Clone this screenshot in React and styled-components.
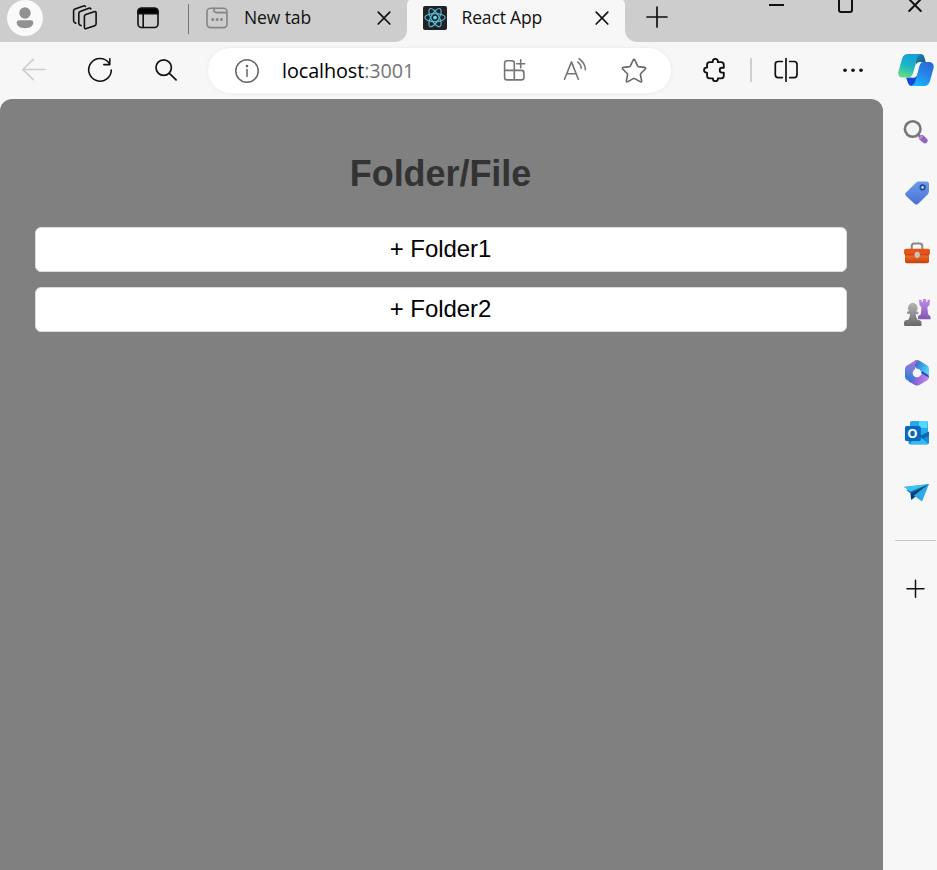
import React from "react";
import styled, { createGlobalStyle } from "styled-components";

const GlobalStyle = createGlobalStyle`
  * { box-sizing: border-box; }
  body { margin: 0; background: #f7f7f7; }
`;

const Browser = styled.div`
  width: 937px;
  height: 870px;
  display: flex;
  flex-direction: column;
  overflow: hidden;
  background: #f7f7f7;
  font-family: "Open Sans", "Noto Sans", sans-serif;
  color: #111;
`;

const TabStrip = styled.header`
  display: flex;
  height: 42px;
  flex: none;
  background: linear-gradient(#cdcdcd 0 16px, #f7f7f7 16px);
`;

const StripSection = styled.div`
  display: flex;
  align-items: center;
  height: 42px;
  padding-bottom: 6px;
  background: #cdcdcd;
`;

const LeftSection = styled(StripSection)`
  width: 407px;
  padding-left: 7px;
  border-bottom-right-radius: 12px;
`;

const RightSection = styled(StripSection)`
  width: 312px;
  padding-left: 21px;
  border-bottom-left-radius: 12px;
`;

const ActiveTab = styled(StripSection)`
  width: 218px;
  padding-left: 16px;
  background: #f7f7f7;
  border-radius: 3px 3px 0 0 / 5px 5px 0 0;
`;

const TabTitle = styled.span`
  width: ${(p) => p.$width}px;
  margin-left: ${(p) => p.$gap}px;
  margin-bottom: 2px;
  font-size: 17.5px;
  line-height: 24px;
  letter-spacing: ${(p) => p.$tracking}px;
  white-space: nowrap;
`;

const Icon = styled.svg`
  display: block;
  flex: none;
  width: ${(p) => p.$size || 24}px;
  height: ${(p) => p.$size || 24}px;
  margin-left: ${(p) => p.$gap || 0}px;
  margin-bottom: ${(p) => p.$lift || 0}px;
  overflow: visible;
  fill: none;
  stroke: ${(p) => p.$color || "#111"};
  stroke-width: ${(p) => p.$weight || 1.6};
  stroke-linecap: round;
  stroke-linejoin: round;
`;

const Divider = styled.span`
  flex: none;
  width: ${(p) => p.$width}px;
  height: ${(p) => p.$height}px;
  margin-left: ${(p) => p.$gap}px;
  margin-top: ${(p) => p.$drop || 0}px;
  background: ${(p) => p.$color};
`;

const Toolbar = styled.nav`
  display: flex;
  align-items: center;
  height: 57px;
  flex: none;
  padding: 0 0 1px 22px;
`;

const AddressBar = styled.div`
  display: flex;
  align-items: center;
  width: 463px;
  height: 45px;
  margin-left: 30px;
  padding: 1px 0 0 27px;
  border-radius: 23px;
  background: #fff;
  box-shadow: 0 0 5px rgba(0, 0, 0, 0.06);
`;

const Address = styled.span`
  width: 205px;
  margin-left: 23px;
  font-size: 19.8px;
  line-height: 28px;
  letter-spacing: -0.08px;
  white-space: nowrap;
  color: #000;
`;

const Port = styled.span`
  color: #757575;
`;

const Body = styled.div`
  display: flex;
  flex: 1;
`;

const Page = styled.main`
  width: 883px;
  padding: 50px 36px 0 35px;
  border-radius: 12px 12px 0 0;
  background: #808080;
  font-family: "Liberation Sans", Arial, sans-serif;
`;

const Heading = styled.h1`
  margin: 0 0 29px;
  height: 49px;
  padding-right: 1px;
  font-size: 36px;
  line-height: 49px;
  letter-spacing: -0.05px;
  text-align: center;
  color: #333;
`;

const FolderRow = styled.div`
  height: 45px;
  margin-bottom: 15px;
  padding-right: 1px;
  border: 1px solid #ddd;
  border-radius: 6px;
  background: #fff;
  color: #000;
  font-size: 24px;
  line-height: 42px;
  letter-spacing: -0.08px;
  text-align: center;
`;

const Sidebar = styled.aside`
  display: flex;
  flex-direction: column;
  align-items: center;
  width: 54px;
  padding: 19px 0 0 12px;
  gap: 32px;
`;

const SidebarApps = styled.div`
  display: flex;
  flex-direction: column;
  gap: 32px;
  margin: 1px 0 0 2px;
`;

const SidebarRule = styled.hr`
  width: 41px;
  height: 1px;
  margin: 1px 1px 0 0;
  border: 0;
  background: #c9c9c9;
`;

const CloseIcon = ({ gap, lift, weight = 1.7 }) => (
  <Icon $gap={gap} $lift={lift} $weight={weight} viewBox="0 0 24 24">
    <path d="M6.2 6.2l11.6 11.8M17.8 6.2L6.2 18" />
  </Icon>
);

const Avatar = () => (
  <Icon $size={36} viewBox="0 0 36 36">
    <g stroke="none">
      <circle cx="18" cy="18" r="18" fill="#fafafa" />
      <circle cx="18" cy="13" r="5.7" fill="#919191" />
      <path fill="#919191" d="M12.2 20.2h11.6c1.7 0 2.5 1 2.5 2.3 0 3.8-3.8 5.7-8.3 5.7s-8.3-1.9-8.3-5.7c0-1.3.8-2.3 2.5-2.3z" />
    </g>
  </Icon>
);

const WorkspacesIcon = () => (
  <Icon $gap={29} $size={26} viewBox="0 0 26 26">
    <path d="M12.4 11.4q0-1.5 1.4-2l8.3-2.7q2-.6 2 1.3v10.7q0 1.5-1.4 2l-8.3 2.8q-2 .7-2-1.4z" />
    <path d="M9.1 20.6l-1.3-.6q-1-.6-1-2V8.5q0-1.5 1.4-2.1l8.6-3.1q1.5-.5 2 .6" />
    <path d="M3.9 18.2l-1.3-.6q-1-.6-1-2V6q0-1.4 1.4-2l8.5-3q1.3-.5 1.8.5" />
  </Icon>
);

const TabActionsIcon = () => (
  <Icon $gap={38} viewBox="0 0 24 24">
    <rect x="2" y="2.2" width="20" height="19.3" rx="3.5" />
    <path d="M2 7.8V5.7q0-3.5 3.5-3.5h13q3.5 0 3.5 3.5v2.1z" fill="#000" />
    <path d="M7.2 8v13.5" />
  </Icon>
);

const NewTabIcon = () => (
  <Icon $gap={16} $color="#858585" viewBox="0 0 24 24">
    <rect x="2" y="2.2" width="20" height="19.4" rx="3.5" />
    <path d="M9 2.3v1.8q0 2.5 2.5 2.5h10" />
    <g fill="#858585" stroke="none">
      <circle cx="7.7" cy="13.4" r="1.5" />
      <circle cx="12.1" cy="13.4" r="1.5" />
      <circle cx="16.5" cy="13.4" r="1.5" />
    </g>
  </Icon>
);

const ReactLogo = () => (
  <Icon $color="#55bcd8" $weight={1.15} viewBox="0 0 24 24">
    <rect width="24" height="24" rx="2" fill="#202225" stroke="none" />
    <ellipse cx="12" cy="11.6" rx="10.2" ry="4" />
    <ellipse cx="12" cy="11.6" rx="10.2" ry="4" transform="rotate(60 12 11.6)" />
    <ellipse cx="12" cy="11.6" rx="10.2" ry="4" transform="rotate(120 12 11.6)" />
    <circle cx="12" cy="11.6" r="1.9" fill="#61dafb" stroke="none" />
  </Icon>
);

const CopilotLogo = () => (
  <Icon $gap={33} $size={36} viewBox="0 0 36 36">
    <defs>
      <linearGradient id="copilotLeft" x1=".6" y1="0" x2=".3" y2="1">
        <stop stopColor="#189dd9" /><stop offset=".5" stopColor="#18b5c5" /><stop offset="1" stopColor="#62dd83" />
      </linearGradient>
      <linearGradient id="copilotRight" x1=".8" y1="0" x2=".3" y2="1">
        <stop stopColor="#2867d4" /><stop offset=".5" stopColor="#2786e8" /><stop offset="1" stopColor="#15b8fd" />
      </linearGradient>
      <linearGradient id="copilotFold" x1="0" y1="0" x2="1" y2="1">
        <stop stopColor="#2185b7" /><stop offset="1" stopColor="#14547f" />
      </linearGradient>
    </defs>
    <g stroke="none">
      <path fill="url(#copilotFold)" d="M18 2h4.5q3 0 3.8 3l1.4 5h-5q-4 0-5 4z" />
      <path fill="#1648d8" d="M8 25.5h9l3-3v8q-2 3.5-4 3.5h-2q-3 0-4-3z" />
      <path fill="url(#copilotLeft)" d="M10 2h14q-4 .5-5.2 5l-3.5 13.5q-1.3 5-6.3 5H5Q-.5 25.5.3 20L4 7q1.3-5 6-5z" />
      <path fill="url(#copilotRight)" d="M25 10h5.5q5.7 0 5.2 5.5L32 29q-1.4 5-6 5H12.5q3.7-.8 5-5.5l3.6-13.5q1.3-5 3.9-5z" />
      <path fill="#f7f7f7" d="M18 13.5q.9-3.3 3.6-3.3h1.6q-1.3 1-2.1 3.8l-2.4 8.5q-.8 3-3.2 3h-2.3q1.3-.9 2-3.5z" />
    </g>
  </Icon>
);

const SidebarSearch = () => (
  <Icon $size={28} viewBox="0 0 28 28">
    <circle cx="10.7" cy="11" r="7.8" stroke="#777" strokeWidth="2.6" fill="#f0f5f6" />
    <path d="M16.3 16.8l2.3 2.1" stroke="#777" strokeWidth="2.5" />
    <path d="M19.6 19.6l3.2 2.9" stroke="#9462c2" strokeWidth="5.6" />
    <path d="M18 20.2l1.8-1.9" stroke="#bd8bdc" strokeWidth="2.2" />
  </Icon>
);

const Tag = () => (
  <Icon $size={28} viewBox="0 0 28 28">
    <defs><linearGradient id="tagFill" x2="0" y2="1"><stop stopColor="#6a9cec" /><stop offset="1" stopColor="#4a70d3" /></linearGradient></defs>
    <path stroke="none" fill="url(#tagFill)" d="M15.8 2.5h7.7q2.5 0 2.5 2.5v7.1q0 2-1.4 3.3l-9.1 9.2q-2.1 2.1-4.3 0l-8.1-7.7q-1.9-1.8 0-3.5L13 3.8q1.2-1.2 2.8-1.3z" />
    <circle cx="19.6" cy="8.4" r="2.2" fill="#c5e3ff" stroke="#29469c" strokeWidth="1.8" />
  </Icon>
);

const Toolbox = () => (
  <Icon $size={28} viewBox="0 -1 28 28">
    <defs><linearGradient id="boxFill" x2="0" y2="1"><stop stopColor="#f6772a" /><stop offset="1" stopColor="#c53d0c" /></linearGradient></defs>
    <path d="M8.7 9V6.1q0-2.5 2.5-2.5h5.6q2.5 0 2.5 2.5V9" stroke="#888" strokeWidth="2" />
    <g stroke="none">
      <path d="M2 14h24v7.3q0 2-2 2H4q-2 0-2-2z" fill="url(#boxFill)" />
      <path d="M3 8.8h22q2 0 2 2V13q0 2-2 2H3q-2 0-2-2v-2.2q0-2 2-2z" fill="#e65318" />
      <path d="M2 14.2h24v1.2H2z" fill="#c24315" />
      <rect x="11.6" y="11.8" width="5.2" height="6.2" rx="2.4" fill="#c4c4c4" />
    </g>
  </Icon>
);

const Chess = () => (
  <Icon $size={28} viewBox="0 0 28 28">
    <defs>
      <linearGradient id="rook" x2="0" y2="1"><stop stopColor="#c08be9" /><stop offset="1" stopColor="#8458b6" /></linearGradient>
      <linearGradient id="pawn" x2="0" y2="1"><stop stopColor="#b5b5b5" /><stop offset="1" stopColor="#686868" /></linearGradient>
    </defs>
    <g stroke="none">
      <path fill="url(#rook)" d="M16 .8h2.5v2H20V0h3v2.8h1.5v-2H27l-.5 5.2-2.2 2.2.8 7 2.4 2.2v2.8H15v-3l2.8-2 .6-7L16.5 6z" />
      <path fill="url(#pawn)" d="M9.7 3.8a5.2 5.2 0 0 1 3.6 8.6h1.2q2 1.2 0 2.7h-1.8q.1 3.3 2 6h1.4q2.5.3 2.5 3v1.8q0 1.1-1.2 1.1H2.2q-1.2 0-1.2-1.1V24q0-2.6 2.8-3h1.3q1.9-2.6 2-6H4.8q-1.8-1.4 0-2.7h1.3a5.2 5.2 0 0 1 3.6-8.5z" />
    </g>
  </Icon>
);

const Microsoft365 = () => (
  <Icon $size={28} viewBox="0 0 28 28">
    <defs>
      <linearGradient id="msTop" x2="1" y2=".6"><stop stopColor="#3555bb" /><stop offset="1" stopColor="#52dbff" /></linearGradient>
      <linearGradient id="msLeft" x1=".7" x2=".3" y2="1"><stop stopColor="#b86eda" /><stop offset=".5" stopColor="#6f7fdb" /><stop offset="1" stopColor="#2878d8" /></linearGradient>
      <linearGradient id="msBottom" x2="1" y2="0"><stop stopColor="#6750c8" /><stop offset="1" stopColor="#c68aec" /></linearGradient>
    </defs>
    <g stroke="none">
      <path fill="url(#msTop)" d="M12 1.6q2-1.2 4 0l8 4.6q2 1.3 2 3.6v8.7L17 14 10.5 6z" />
      <path fill="url(#msBottom)" d="M26 16v2.2q0 2-2 3.2l-7.7 4.5q-2.2 1.3-4.5 0L5 22l7-5 12-3z" />
      <path fill="url(#msLeft)" d="M11.5 2q2-1.2 4.5-.8-4 1.8-4 5.3v12q0 4-4.2 4.6L4 21q-2-1.2-2-3.5V10q0-2.3 2-3.5z" />
      <path fill="#1f4ca8" d="M18.3 14.3l7.7 4.2q0-1.5-1.2-2.5L19 12z" />
      <circle cx="14" cy="14" r="4.3" fill="#f7f7f7" />
    </g>
  </Icon>
);

const LetterO = styled.text`
  fill: #fff;
  stroke: none;
  font: 700 13px "Open Sans", sans-serif;
  text-anchor: middle;
`;

const Outlook = () => (
  <Icon $size={28} viewBox="0 0 28 28">
    <g stroke="none">
      <rect x="7" y="2" width="18" height="16" rx="1.5" fill="#29a8e8" />
      <path fill="#50d9ff" d="M16 2h8.5v7H16z" />
      <path fill="#0872c2" d="M7 7h9v10H7z" />
      <path fill="#178cdd" d="M5.5 16h20.5v7.6q0 1.9-2 1.9H7.5q-2 0-2-2z" />
      <path fill="#1266ab" d="M16 17.5l10-5v4l-7 4z" />
      <path fill="#35b9f5" d="M7 24l9-7 9.5 8H8z" />
      <rect x="2" y="7" width="15.8" height="15" rx="1.6" fill="#0867c2" />
    </g>
    <LetterO x="9.5" y="19">O</LetterO>
  </Icon>
);

const PaperPlane = () => (
  <Icon $size={28} viewBox="0 -.5 28 28">
    <g stroke="none">
      <path fill="#35b7ed" d="M1 7.5L26 4.5 10 14z" />
      <path fill="#1474bb" d="M3.5 10.5L26 4.5 9.4 20l-1.8-6z" />
      <path fill="#073f7a" d="M7.5 14L26 4.5 8.1 20.5z" />
      <path fill="#2caae6" d="M26 4.5L19 22 10.8 16z" />
      <path fill="#40c2ef" d="M1 7.3L26 4.5 7.3 12z" />
    </g>
  </Icon>
);

export default function App() {
  return (
    <>
      <GlobalStyle />
      <Browser>
        <TabStrip>
          <LeftSection>
            <Avatar />
            <WorkspacesIcon />
            <TabActionsIcon />
            <Divider $width={1} $height={30} $gap={28} $drop={2} $color="#777" />
            <NewTabIcon />
            <TabTitle $width={112} $gap={15} $tracking={-0.1}>New tab</TabTitle>
            <CloseIcon gap={16} />
          </LeftSection>
          <ActiveTab>
            <ReactLogo />
            <TabTitle $width={115} $gap={14.5} $tracking={-0.15}>React App</TabTitle>
            <CloseIcon gap={13.5} />
          </ActiveTab>
          <RightSection>
            <Icon $size={22} $weight={1.7} $lift={2} viewBox="0 0 22 22"><path d="M11 1v20M1 11h20" /></Icon>
            <Icon $gap={96} $lift={24} $weight={2} viewBox="0 0 24 24"><path d="M5 11h15" strokeLinecap="butt" /></Icon>
            <Icon $gap={46} $lift={24} $weight={2} viewBox="0 0 24 24"><rect x="5" y="4" width="13" height="14" rx="2" /></Icon>
            <CloseIcon gap={44.5} lift={26} weight={2} />
          </RightSection>
        </TabStrip>
        <Toolbar>
          <Icon $color="#ccc" viewBox="0 0 24 24"><path d="M23.2 11.5H.7M11.3 1.4L.7 11.5l10.6 10.2" /></Icon>
          <Icon $gap={42} $weight={1.6} viewBox="0 0 24 24"><path d="M21 5A11.3 11.3 0 1 0 23.3 12M21.8.8v5.8h-6" /></Icon>
          <Icon $gap={42} $weight={1.7} viewBox="0 0 24 24"><circle cx="9.7" cy="9.6" r="7.7" /><path d="M15.4 15.3l6.7 6.5" /></Icon>
          <AddressBar>
            <Icon $color="#666" $weight={1.5} viewBox="0 0 24 24"><circle cx="12" cy="12" r="11.2" /><path d="M12 10.4v7.2" /><circle cx="12" cy="7.1" r=".6" fill="#666" /></Icon>
            <Address>localhost<Port>:3001</Port></Address>
            <Icon $gap={16} $color="#757575" viewBox="0 0 24 24"><path d="M11.3 11.4V4.2q0-2.5-2.5-2.5H4q-2.4 0-2.4 2.5v14.2q0 2.5 2.4 2.5h14.4q2.5 0 2.5-2.5v-4.5q0-2.5-2.5-2.5H1.6M11.3 11.4v9.5M17.7.8v8M13.7 4.8h8" /></Icon>
            <Icon $gap={36} $color="#757575" viewBox="0 0 24 24"><path d="M1.5 20.2l7-17.3 6.8 17.3M4 14.7h9M14.7 3.1q3.4 2.1 3.5 6.2M16.1-.3q6.1 4.5 6.3 11" /></Icon>
            <Icon $gap={35} $color="#666" viewBox="0 0 24 24"><path d="M11 1.3q1-1.9 2 0l2.6 5.6q.3.6.9.7l6 .8q2 .3.6 1.8l-4.3 4.3q-.5.5-.4 1.1l1.2 6q.3 2-1.5 1l-5.4-3q-.7-.4-1.4 0l-5.4 3q-1.8 1-1.5-1l1.2-6q.1-.7-.4-1.1L.9 10.2q-1.4-1.5.6-1.8l6-.8q.6-.1.9-.7z" /></Icon>
          </AddressBar>
          <Icon $gap={31} $weight={2} viewBox="-1.2 -.8 26 26"><path d="M10.4 3.7V3a2.8 2.8 0 0 1 5.6 0v.7h3.4q3 0 3 3v3.1h-1.8a2.6 2.6 0 0 0 0 5.2h1.8v3.5q0 2.8-3 2.8H16v.3a2.7 2.7 0 0 1-5.4 0v-.3H7.1q-2.8 0-2.8-2.8V15h-.6a2.7 2.7 0 0 1 0-5.4h.6V6.5q0-2.8 2.8-2.8z" /></Icon>
          <Divider $width={2} $height={24} $gap={24} $color="#cfcfcf" />
          <Icon $gap={22} $weight={1.7} viewBox="0 0 24 24"><path d="M8.3 3.5H4.1Q1.3 3.5 1.3 6.3v10.5q0 2.8 2.8 2.8h4.2M15.7 3.5h4.5q2.8 0 2.8 2.8v10.5q0 2.8-2.8 2.8h-4.5M12 .7v22.5" /></Icon>
          <Icon $gap={43} viewBox="0 0 24 24"><g fill="#111" stroke="none"><circle cx="4" cy="12.2" r="1.8" /><circle cx="12" cy="12.2" r="1.8" /><circle cx="20" cy="12.2" r="1.8" /></g></Icon>
          <CopilotLogo />
        </Toolbar>
        <Body>
          <Page>
            <Heading>Folder/File</Heading>
            <FolderRow>+ Folder1</FolderRow>
            <FolderRow>+ Folder2</FolderRow>
          </Page>
          <Sidebar>
            <SidebarSearch />
            <SidebarApps>
              <Tag />
              <Toolbox />
              <Chess />
              <Microsoft365 />
              <Outlook />
              <PaperPlane />
            </SidebarApps>
            <SidebarRule />
            <Icon $size={28} $weight={1.5} viewBox="0 0 28 28"><path d="M13.5 7.3v17M5 15.8h17" /></Icon>
          </Sidebar>
        </Body>
      </Browser>
    </>
  );
}
